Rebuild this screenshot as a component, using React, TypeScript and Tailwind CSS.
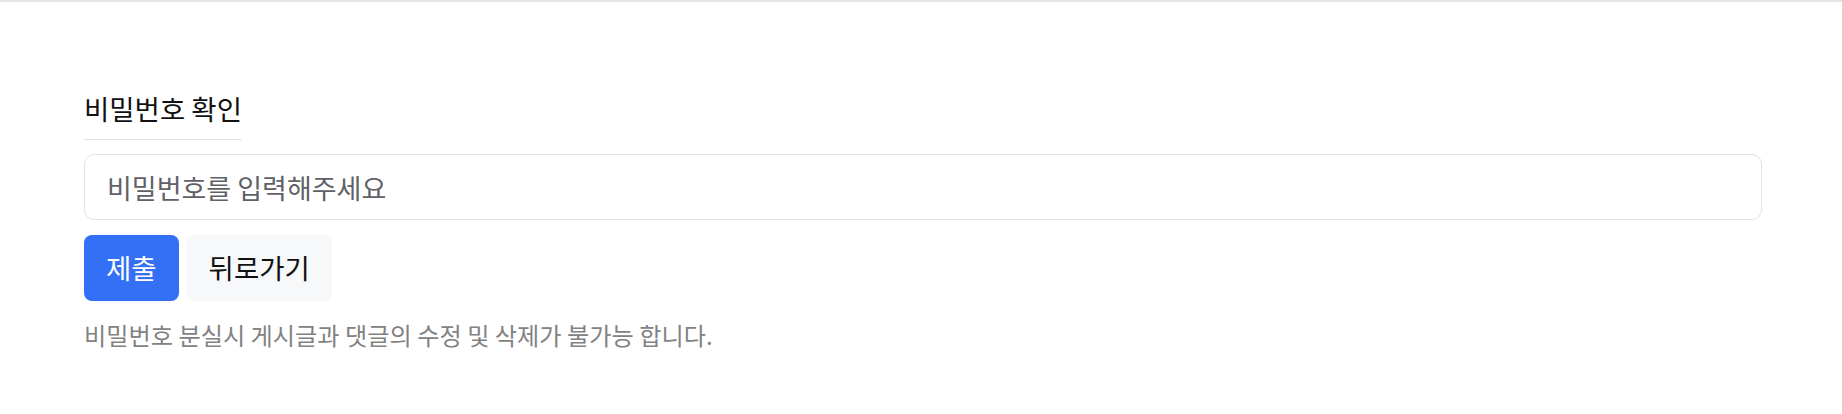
import { useState } from "react";

export default function App() {
	const [password, setPassword] = useState("");

	return (
		<div
			className="min-h-screen bg-white border-t-2 border-[#e4e4e4] text-[#111111]"
			style={{ fontFamily: '"Noto Sans CJK KR", "Noto Sans", sans-serif' }}
		>
			<div className="pl-[84px] pr-[80px] pt-[88px]">
				{/* Title */}
				<h2 className="inline-block border-b border-[#e2e2e2] pb-[13px] text-[27.5px] leading-[36px] font-normal">
					비밀번호 확인
				</h2>

				{/* Password input */}
				<input
					type="password"
					value={password}
					onChange={e => setPassword(e.target.value)}
					placeholder="비밀번호를 입력해주세요"
					className="mt-[14px] block w-full h-[66px] rounded-[10px] border border-[#e1e1e6] px-[22px] text-[27px] text-[#222222] placeholder:text-[#5f6166] outline-none"
				/>

				{/* Actions */}
				<div className="mt-[15px] flex gap-2">
					<button className="h-[66px] px-[22px] rounded-[8px] bg-[#3370f5] text-white text-[27.5px]">
						제출
					</button>
					<button className="h-[66px] px-[22px] rounded-[8px] bg-[#f7f8fa] text-[#111111] text-[27.5px]">
						뒤로가기
					</button>
				</div>

				<p className="mt-[18px] text-[24.2px] leading-[32px] text-[#828282]">
					비밀번호 분실시 게시글과 댓글의 수정 및 삭제가 불가능 합니다.
				</p>
			</div>
		</div>
	);
}
